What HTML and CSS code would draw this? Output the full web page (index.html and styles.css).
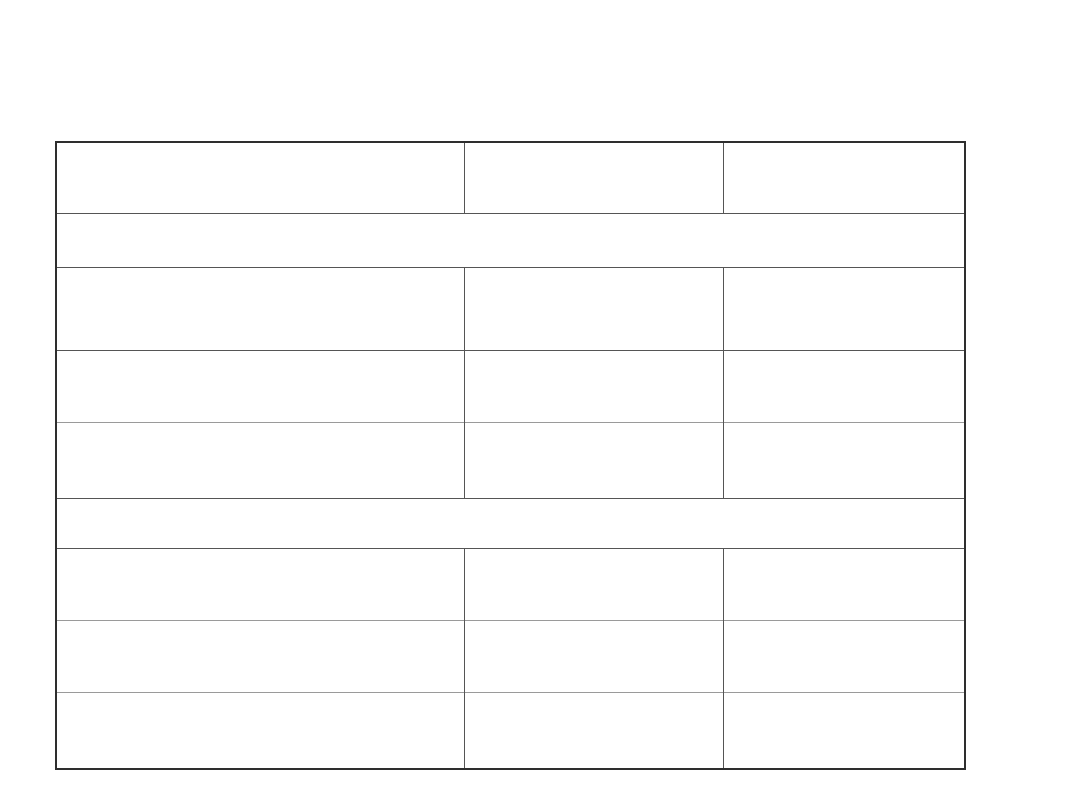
FILE: index.html
```html
<!DOCTYPE html>
<html>
<head>
<meta charset="utf-8">
<link rel="stylesheet" href="styles.css">
</head>
<body>
<div class="page">
  <table class="grid">
    <colgroup>
      <col class="c1">
      <col class="c2">
      <col class="c3">
    </colgroup>
    <tr class="r-head"><td></td><td></td><td></td></tr>
    <tr class="r-group dark"><td colspan="3"></td></tr>
    <tr class="r-tall dark"><td></td><td></td><td></td></tr>
    <tr class="r-std dark"><td></td><td></td><td></td></tr>
    <tr class="r-mid light"><td></td><td></td><td></td></tr>
    <tr class="r-group2 dark"><td colspan="3"></td></tr>
    <tr class="r-std dark"><td></td><td></td><td></td></tr>
    <tr class="r-std light"><td></td><td></td><td></td></tr>
    <tr class="r-mid light"><td></td><td></td><td></td></tr>
  </table>
</div>
</body>
</html>
```

FILE: styles.css
```css
html, body {
  margin: 0;
  padding: 0;
  background: #ffffff;
  font-family: "Liberation Sans", Arial, sans-serif;
}
.page {
  width: 1080px;
  height: 810px;
  padding: 141px 0 0 55px;
  box-sizing: border-box;
}
.grid {
  border-collapse: collapse;
  table-layout: fixed;
  width: 909px;
  border: 2px solid #2e2e2e;
}
.c1 { width: 408px; }
.c2 { width: 259px; }
.c3 { width: 242px; }
.grid td {
  padding: 0;
  border-left: 1px solid #555555;
  border-right: 1px solid #555555;
}
.grid tr.dark td { border-top: 1px solid #555555; }
.grid tr.light td { border-top: 1px solid #9a9a9a; }
.r-head td { height: 70px; }
.r-group td { height: 53px; }
.r-tall td { height: 82px; }
.r-std td { height: 71px; }
.r-mid td { height: 75px; }
.r-group2 td { height: 49px; }
```
